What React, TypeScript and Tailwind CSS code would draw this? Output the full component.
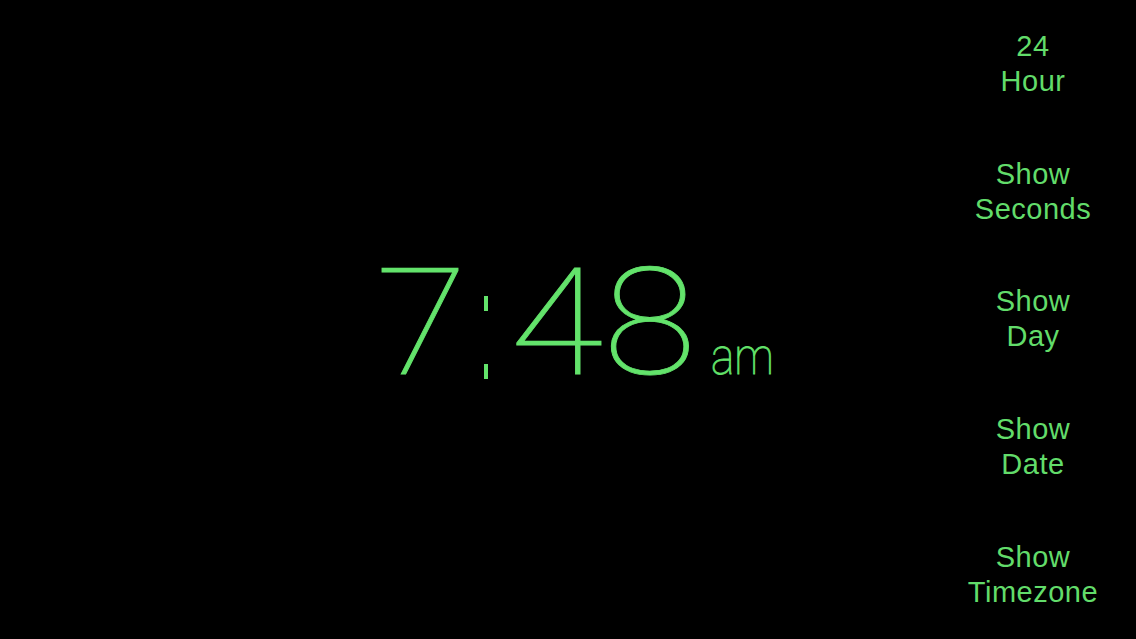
import React from "react";

const options: [string, string][] = [
  ["24", "Hour"],
  ["Show", "Seconds"],
  ["Show", "Day"],
  ["Show", "Date"],
  ["Show", "Timezone"],
];

const App: React.FC = () => {
  return (
    <div className="w-[1136px] h-[639px] bg-black grid grid-cols-[200px_1fr_200px] overflow-hidden">
      {/* left spacer keeps the clock centred on the screen */}
      <div />

      {/* Clock */}
      <div className="flex items-center justify-center">
        <div
          className="flex items-baseline text-[#63e36b] pt-[8px] pl-[30px] [-webkit-text-stroke:0.8px_#63e36b]"
          style={{ fontFamily: "Roboto, Inter, Lato, sans-serif" }}
        >
          <span className="inline-block text-[148px] leading-none font-thin scale-x-[1.13]">7</span>
          <div className="self-end flex flex-col justify-between h-[83px] ml-[22px] mr-[28px] mb-[19px]">
            <span className="block w-[4px] h-[15px] bg-[#63e36b]" />
            <span className="block w-[4px] h-[15px] bg-[#63e36b]" />
          </div>
          <span className="inline-block text-[148px] leading-none font-thin scale-x-[1.15]">4</span>
          <span className="inline-block text-[148px] leading-none font-thin scale-x-[1.15] ml-[12px]">8</span>
          <span className="inline-block text-[52px] leading-none font-thin scale-x-[0.85] origin-left ml-[21px]">
            am
          </span>
        </div>
      </div>

      {/* Options column */}
      <div
        className="grid grid-rows-5 pr-[6px] text-[#62dc6a]"
        style={{ fontFamily: "'Liberation Sans', Arial, sans-serif" }}
      >
        {options.map(([a, b]) => (
          <button
            key={b}
            className="flex flex-col items-center justify-center text-[29px] leading-[35px] tracking-[0.5px]"
          >
            <span>{a}</span>
            <span>{b}</span>
          </button>
        ))}
      </div>
    </div>
  );
};

export default App;
